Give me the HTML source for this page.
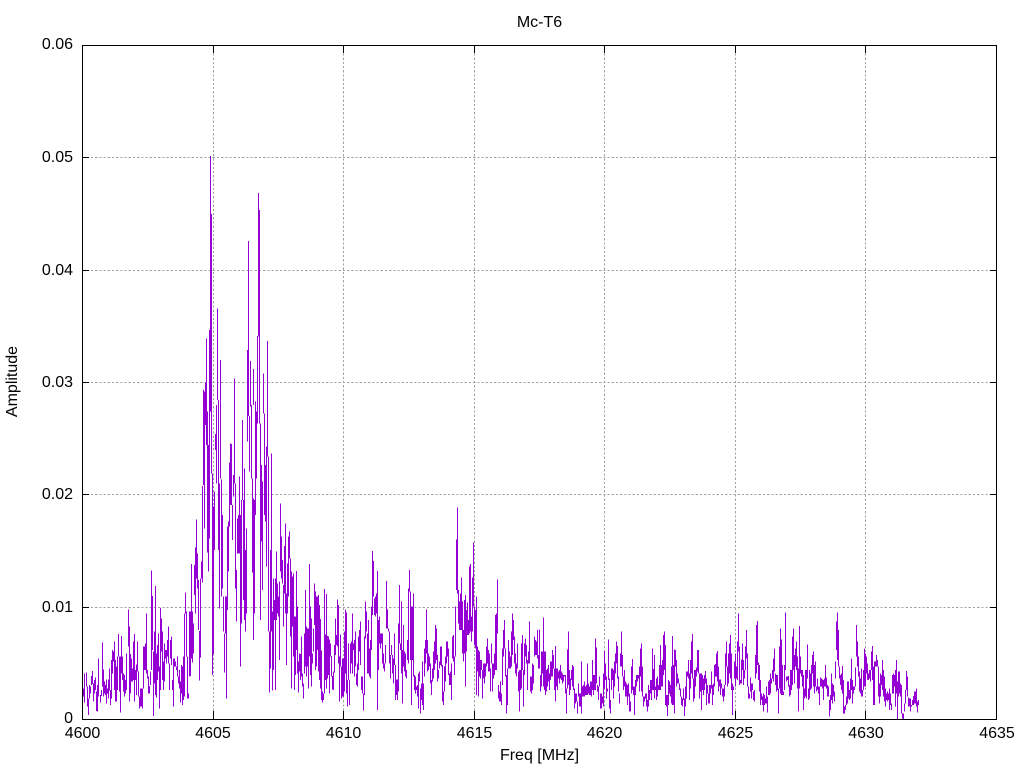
<!DOCTYPE html>
<html><head><meta charset="utf-8"><title>Mc-T6</title>
<style>
html,body{margin:0;padding:0;background:#fff}
svg{display:block}
text{font-family:"Liberation Sans",sans-serif;font-size:16px;fill:#000}
.d{fill:none;stroke:#9400d3;stroke-width:3;shape-rendering:crispEdges}
</style></head><body>
<svg width="1024" height="768" viewBox="0 0 1024 768" xmlns="http://www.w3.org/2000/svg">
<rect width="1024" height="768" fill="#fff"/>
<g stroke="#a0a0a0" stroke-width="1" stroke-dasharray="2.2 2" fill="none" shape-rendering="crispEdges">
<path d="M82.5 157.5H996.5M82.5 270.5H996.5M82.5 382.5H996.5M82.5 494.5H996.5M82.5 607.5H996.5"/>
<path d="M213.5 45V719M343.5 45V719M474.5 45V719M604.5 45V719M735.5 45V719M865.5 45V719"/>
</g>
<g transform="translate(80.1667,480) scale(.33333)">
<path class="d" d="M10 625V650M13 580V668M25 655V705M28 615V655M31 620V640M34 588V615M37 573V612M40 610V665M43 600V640M49 635V693M52 615V695M55 535V650M64 630V648M67 487V620M70 568V650M73 605V640M76 615V645M79 598V670M82 625V640M85 598V655M88 565V632M91 630V675M94 540V655M97 510V580M100 515V545M103 485V630M106 540V665M109 560V665M112 530V630M115 462V530M118 530V635M121 530V698M124 468V580M127 530V600M130 580V635M133 585V650M136 600V640M139 520V630M145 388V500M148 440V665M151 522V640M154 535V605M157 565V605M160 485V600M163 462V665M166 570V600M169 553V645M172 485V575M175 575V650M178 650V685M181 625V680M184 625V680M187 625V685M190 500V625M193 500V570M196 490V570M199 400V580M202 570V595M205 590V640M208 618V640M211 575V615M214 272V570M217 348V510M220 515V708M223 455V610M226 318V645M229 520V653M232 495V600M235 460V575M238 560V685M241 384V630M244 415V515M247 455V600M250 545V630M253 490V605M256 510V535M259 510V550M262 480V530M265 440V550M268 550V630M271 480V535M274 470V555M277 600V630M280 535V680M283 535V560M286 545V560M289 560V570M292 530V590M295 590V610M298 570V625M301 605V668M304 555V640M307 560V675M310 530V660M313 400V650M316 337V400M319 395V530M322 530V655M325 640V655M328 395V590"/>
</g>
<g transform="translate(80.5,480) scale(.33333)">
<path class="d" d="M18 578V620M21 620V680M45 592V630M60 645V668M660 522V600M663 470V590M666 580V620M669 610V655M672 460V580M675 330V560M678 440V590M681 445V560M684 445V625M687 252V530M690 380V585M693 415V620M696 520V550M699 445V515M702 310V435M705 335V570M708 350V560M711 350V510M714 345V575M717 375V600"/>
</g>
<g transform="translate(190.1667,370) scale(.33333)">
<path class="d" d="M1 725V918M4 582V865M7 725V878M10 760V850M13 585V675M16 533V730M19 448V625M22 550V655M25 630V780M28 783V932M31 625V862M34 575V625M37 348V638M40 58V345M43 65V475M46 38V165M49 -95V225M52 125V548M55 225V605M58 -120V505M61 -642V125M64 -468V310M67 310V915M70 410V852M73 365V540M76 192V240M79 105V340M82 -185V90M85 90V540M88 340V715M91 -30V325M94 328V680M97 435V655M100 680V785M103 790V908M106 680V790M109 680V985M112 470V720M115 455V605M118 278V470M121 220V405M124 222V405M127 405V510M130 315V380M133 25V340M136 340V655M139 600V755M142 445V550M145 435V550M148 320V550M151 435V890M154 390V760M157 150V390M160 390V690M163 295V750M166 540V785M169 475V730M172 -60V215M175 -387V138M178 138V305M181 -27V110M184 105V325M187 325V608M190 -3V105M190 385V810M193 390V730M196 95V435M199 125V325M202 -102V160M205 -531V-100M208 -480V160M211 160V750M214 285V515M217 335V660M220 10V130M223 130V435M226 285V455M229 230V590M232 -87V260M235 260V785M238 785V968M241 540V895M244 250V785M247 725V962M250 625V900M253 690V750M256 625V960M259 545V750M262 640V730M265 680V740M268 635V870M271 400V605M274 500V625M277 570V640M280 645V770M283 528V670M286 460V730M289 670V885M292 580V730M295 500V680M298 484V565M301 565V800M304 605V955M307 620V770M310 610V860M313 740V960M316 740V915M319 603V840M322 710V910M325 875V968M328 850V905"/>
</g>
<g transform="translate(320.5,500) scale(.33333)">
<path class="d" d="M0 357V565M3 452V600M6 575V608M9 580V600M12 267V580M15 403V540M18 282V565M21 408V535M24 410V525M27 418V580M30 430V470M33 468V530M36 528V568M39 515V570M42 435V518M45 355V465M48 405V435M51 298V440M54 315V490M57 470V605M60 403V500M63 500V595M66 475V590M69 475V590M72 395V575M75 328V520M78 338V580M81 540V620M84 430V540M87 540V615M90 430V520M93 425V490M96 340V520M99 430V450M102 420V530M105 395V500M108 520V555M111 490V560M114 410V510M117 390V455M120 365V495M123 530V570M126 530V580M129 580V632M132 410V585M135 305V415M138 335V395M141 400V520M144 360V520M147 445V530M150 420V535M153 320V450M156 153V345M159 183V290M162 295V345M165 290V350M168 280V340M171 213V630M174 360V510M177 350V430M180 400V445M183 400V430M186 400V490M189 460V505M192 490V515M195 435V490M198 243V385M201 328V385M204 385V395M207 395V490M210 465V535M213 435V465M216 465V520M219 475V550M222 400V495M225 495V600M228 538V585M231 538V600M234 370V575M237 255V430M240 430V450M243 305V520M246 450V610M249 375V500M252 455V515M255 460V530M258 510V535M261 420V480M264 265V490M267 210V275M270 275V480M273 320V615M276 320V480M279 280V530M282 525V570M285 530V580M288 560V570M291 555V590M294 520V625M297 515V545M300 565V640M303 550V600M306 485V615M309 550V630M312 445V530M315 420V490"/>
</g>
<g transform="translate(320.1667,500) scale(.33333)">
<path class="d" d="M319 328V460M322 420V515M325 460V510M328 470V500M331 490V550M334 540V585M337 505V545M340 455V535M343 425V510M346 375V490M349 385V480M352 465V545M355 510V535M358 485V505M361 440V495M364 440V500M367 495V605M370 575V615M373 500V575M376 470V545M379 425V490M382 425V470M385 445V525M388 520V555M391 515V555M394 490V600M397 410V475M400 405V485M403 470V525M406 320V470M409 118V270M412 22V280M415 270V370M418 305V390M421 280V390M424 232V390M427 305V460M430 390V485M433 300V460M436 285V560M439 330V455M442 308V405M445 360V405M448 200V400M451 192V395M454 350V425M457 232V395M460 127V320M463 320V435M466 330V445M469 290V585M472 440V515M475 450V590M478 455V530M481 480V535M484 480V510M487 510V595M490 490V535M493 490V550M496 490V530M499 440V500M502 415V490M505 450V515M508 460V515M511 505V575M514 430V490M517 490V575M520 490V535M523 460V525M526 345V510M529 340V510M532 238V400M535 555V595M538 575V605M541 545V605M544 580V615M547 445V555M550 390V470M553 360V445M556 445V530M559 525V640M562 505V615M565 420V505M568 455V505M571 470V505M574 395V500M577 340V465M580 360V420M583 410V490M586 460V520M589 490V530M592 430V505M595 515V575M598 510V635M601 510V570M604 430V565M607 405V510M610 510V620M613 430V525M616 415V470M619 435V490M622 480V570M625 455V490M628 365V490M631 530V575M634 530V580M637 490V570M640 495V550M643 410V470M646 420V465M649 425V465M652 390V475M655 465V505M658 388V505"/>
</g>
<g transform="translate(540.5,590) scale(.33333)">
<path class="d" d="M0 255V305M3 185V290M6 185V250M9 82V290M12 185V300M15 185V315M18 240V305M21 235V290M24 225V275M27 250V300M30 215V270M33 215V260M36 180V260M39 195V235M42 235V300M45 168V335M48 235V290M51 235V300M54 245V265M57 240V280M60 225V265M63 245V270M66 250V280M69 255V275M72 255V260M75 255V310M78 295V370M81 178V295M84 125V285M87 240V315M90 265V300M93 240V270M96 225V290M99 230V300M102 295V355M105 310V340M108 310V335M111 335V370M114 280V320M117 310V350M120 310V350M123 215V370M126 290V320M129 285V320M132 275V320M135 290V315M138 285V315M141 220V315M144 280V310M147 290V315M150 275V315M153 275V320M156 210V300M159 255V315M162 255V300M165 145V300M168 172V280M171 285V305M174 290V330M177 260V290M180 310V355M183 310V355M186 320V340M189 250V350M192 183V295M195 220V270M198 260V325M201 295V305M204 148V270M207 265V355M210 330V370M213 235V300M216 235V270M219 240V325M222 215V290M225 190V250M228 155V220M231 168V265M234 260V305M237 310V340M240 190V230M243 125V230M246 195V260M249 260V300M252 240V290M255 275V320M258 280V320M261 285V345M264 280V320M267 310V365M270 335V365M273 230V310M276 207V300M279 290V315M282 290V375M285 270V315M288 255V290M291 255V275M294 255V265M297 230V305M300 175V260M303 160V305M306 230V320M309 320V350M312 320V335M315 310V325M318 310V350M321 330V365M324 285V350M327 300V330M330 270V310M333 270V330M336 175V300M339 237V300M342 195V325M345 290V300M348 265V330M351 260V320M354 285V300M357 225V300M360 165V300M363 225V290M366 210V290M369 135V255M372 125V240M375 165V345M378 315V350M381 315V378M384 270V345M387 275V310M390 285V320M393 230V340M396 138V345M399 225V345M402 178V370M405 180V230M408 210V290M411 250V280M414 265V280M417 280V300M420 295V320M423 320V345M426 325V350M429 295V330M432 325V378M435 290V350M438 245V325M441 245V260M444 210V265M447 250V330M450 210V295M453 155V250M456 132V265M459 265V335M462 240V325M465 240V290M468 232V260M471 180V245M474 180V250M477 250V325M480 250V305M483 250V360M486 255V300M489 265V315M492 255V300M495 243V280M498 265V345M501 285V310M504 310V340M507 285V340M510 285V310M513 245V295M516 285V345M519 280V315M522 225V290M525 222V260M528 190V260M531 183V275M534 230V305M537 268V290M540 268V315M543 280V295M546 295V320M549 295V335M552 285V320M555 190V285M558 155V230M561 230V290M564 190V280M567 160V250M570 135V265"/>
</g>
<g transform="translate(730.5,590) scale(.33333)">
<path class="d" d="M0 135V260M3 190V300M6 280V375M9 290V300M12 215V265M15 190V290M18 230V265M21 155V270M24 70V185M27 170V285M30 270V280M33 208V280M36 160V240M39 210V285M42 240V265M45 170V240M48 120V205M51 190V290M54 290V325M57 310V325M60 262V305M63 280V325M66 280V300M69 305V330M72 300V335M75 195V265M78 105V250M81 93V225M84 217V270M87 225V305M90 270V345M93 310V330M96 320V345M99 310V365M102 315V345M105 325V340M108 290V340M111 320V368M114 275V315M117 270V315M120 250V310M123 265V280M126 240V265M129 205V275M132 175V245M135 250V285M138 255V305M141 255V300M144 295V370M147 170V295M150 115V310M153 148V315M156 225V315M159 305V315M162 225V300M165 68V240M168 260V275M171 260V270M174 258V290M177 285V320M180 240V315M183 240V300M186 140V285M189 115V240M192 195V280M195 175V230M198 155V240M201 200V295M204 235V365M207 108V295M210 200V250M213 240V260M216 240V290M219 255V360M222 295V325M225 240V320M228 240V325M231 163V265M234 295V330M237 240V325M240 250V300M243 225V295M246 195V250M249 185V290M252 225V310M255 215V290M258 290V305M261 265V300M264 290V310M267 290V345M270 262V290M273 265V290M276 268V295M279 270V330M282 265V290M285 225V290M288 262V295M291 285V320M294 290V320M297 330V380M300 315V360M303 250V330M306 280V340M309 285V320M312 305V335M315 215V265M318 95V180M321 68V210M324 120V230M327 230V265M330 255V285M333 250V300M336 228V310M339 270V370M342 350V370M345 345V360M348 320V345M351 275V340M354 275V325M357 300V330M360 265V325M363 205V300M366 270V340M369 290V310M372 290V300M375 232V290M378 105V200M381 155V230M384 200V260M387 245V305M390 265V310M393 235V320M396 300V320M399 240V300M402 175V290M405 190V290M408 200V250M411 220V270M414 250V270M417 240V265M420 240V275M423 185V240M426 168V270M429 230V345M432 215V345M435 215V230M438 195V230M441 210V230M444 230V320M447 280V340M450 250V320M453 255V285M456 210V300M459 240V320M462 260V335M465 295V350M468 310V330M471 305V335M474 310V330M477 295V360M480 310V345M483 340V360M486 255V310M489 250V310M492 255V290M495 240V350M498 210V310M501 275V388M504 245V320M507 245V310M510 280V320M513 285V370M516 370V385M519 370V388M522 340V365M525 300V340M528 243V300M531 260V320M534 322V350M537 325V350M540 325V365M543 345V350M546 330V345M549 318V345M552 305V340M555 305V340M558 295V350M561 335V368M564 330V345"/>
</g>
<g fill="none" stroke="#000" stroke-width="1" shape-rendering="crispEdges">
<rect x="82.5" y="45.5" width="914" height="674"/>
<path d="M82 157.5h7M82 270.5h7M82 382.5h7M82 494.5h7M82 607.5h7M997 157.5h-7M997 270.5h-7M997 382.5h-7M997 494.5h-7M997 607.5h-7"/>
<path d="M213.5 719v-8M343.5 719v-8M474.5 719v-8M604.5 719v-8M735.5 719v-8M865.5 719v-8M213.5 45v8M343.5 45v8M474.5 45v8M604.5 45v8M735.5 45v8M865.5 45v8"/>
</g>
<text x="539.5" y="27" text-anchor="middle">Mc-T6</text>
<g text-anchor="end">
<text x="73" y="49">0.06</text>
<text x="73" y="162">0.05</text>
<text x="73" y="275">0.04</text>
<text x="73" y="387">0.03</text>
<text x="73" y="499">0.02</text>
<text x="73" y="612">0.01</text>
<text x="73" y="723">0</text>
</g>
<g text-anchor="middle">
<text x="82.5" y="738">4600</text>
<text x="213" y="738">4605</text>
<text x="343.5" y="738">4610</text>
<text x="474.5" y="738">4615</text>
<text x="604.5" y="738">4620</text>
<text x="735.5" y="738">4625</text>
<text x="866" y="738">4630</text>
<text x="997" y="738">4635</text>
<text x="539.5" y="760">Freq [MHz]</text>
</g>
<text transform="translate(17,381.5) rotate(-90)" text-anchor="middle">Amplitude</text>
</svg>
</body></html>
